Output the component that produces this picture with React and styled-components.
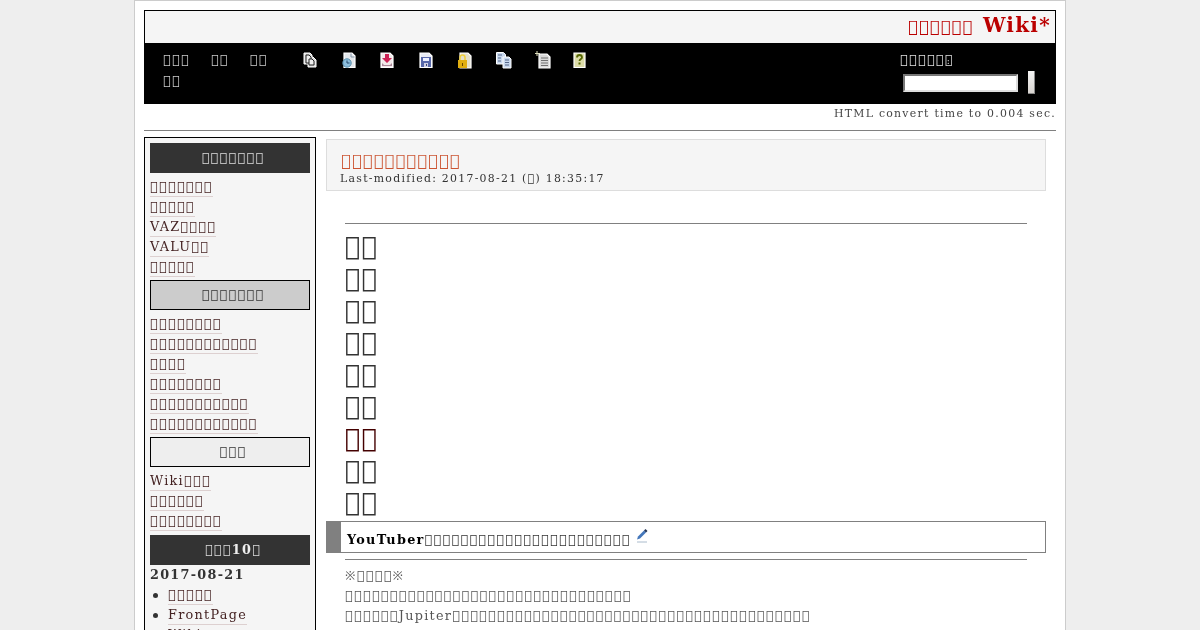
import React from 'react';
import styled, { createGlobalStyle } from 'styled-components';

const T = (n) => '\uE000'.repeat(n);

const GlobalStyle = createGlobalStyle`
  html, body {
    margin: 0;
    height: 630px;
    overflow: hidden;
    background: #eeeeee;
  }
  body {
    font-family: "DejaVu Serif", serif;
    font-size: 12.8px;
    letter-spacing: 1.28px;
    color: #333333;
  }
`;

const Page = styled.div`
  width: 912px;
  margin: 0 auto;
  padding: 9px 9px 0;
  height: 630px;
  background: #ffffff;
  border: 1px solid #cccccc;
  border-bottom: 0;
  overflow: hidden;
  will-change: transform;
`;

const TitleBar = styled.div`
  height: 31px;
  border: 1px solid #000000;
  border-bottom: 0;
  background: #f5f5f5;
  text-align: right;
  padding: 1px 4px 0 0;
  font-size: 20px;
  line-height: 27px;
  color: #bb0000;
`;

const TitleJa = styled.span`
  font-size: 16px;
  margin-right: 2px;
`;

const NavBar = styled.div`
  height: 61px;
  background: #000000;
  display: flex;
  color: #cccccc;
`;

const NavLinks = styled.div`
  width: 140px;
  padding: 7px 0 0 19px;
  line-height: 20.6px;
  display: flex;
  flex-wrap: wrap;
  column-gap: 21px;
  align-content: flex-start;
`;

const IconRow = styled.div`
  display: flex;
  gap: 18.6px;
  padding: 8px 0 0 0;
  align-self: flex-start;
`;

const SearchBox = styled.div`
  margin-left: auto;
  width: 156px;
  padding-top: 7px;
  line-height: 20px;
  color: #e0e0e0;
`;

const Colon = styled.span`
  margin-left: -7px;
  font-size: 9px;
`;

const SearchRow = styled.div`
  display: flex;
  align-items: center;
  padding-left: 3px;
  gap: 10px;
`;

const SearchInput = styled.div`
  width: 115px;
  height: 18px;
  box-sizing: border-box;
  background: #ffffff;
  border: 2px solid;
  border-color: #777777 #dddddd #dddddd #777777;
`;

const SearchButton = styled.div`
  width: 7px;
  height: 23px;
  background: linear-gradient(#f4f4f4, #d8d4d0);
  border-right: 1px solid #888888;
  border-bottom: 1px solid #888888;
  box-sizing: border-box;
`;

const TimeLine = styled.div`
  text-align: right;
  font-size: 10.88px;
  line-height: 18px;
  padding-top: 1px;
  color: #444444;
`;

const Rule = styled.hr`
  border: 0;
  border-top: 1px solid #808080;
  margin: ${({ $m }) => $m || '0'};
`;

const Columns = styled.div`
  display: flex;
  align-items: flex-start;
  margin-top: 6px;
  gap: 10px;
`;

const Side = styled.div`
  width: 160px;
  padding: 5px 5px 40px;
  border: 1px solid #000000;
  background: #f5f5f5;
`;

const SideHead = styled.div`
  height: ${({ $dark }) => ($dark ? '30px' : '28px')};
  line-height: ${({ $dark }) => ($dark ? '30px' : '28px')};
  text-align: center;
  padding-left: 6px;
  background: ${({ $bg }) => $bg};
  color: ${({ $dark }) => ($dark ? '#dddddd' : '#333333')};
  border: ${({ $dark }) => ($dark ? '0' : '1px solid #000000')};
  margin-bottom: 4px;
  strong { color: #eeeeee; }
`;

const SideList = styled.div`
  display: flex;
  flex-direction: column;
  align-items: flex-start;
  margin-bottom: ${({ $gap }) => $gap}px;
`;

const SideLink = styled.a`
  display: inline-block;
  line-height: 20px;
  height: 20px;
  color: #442222;
  box-shadow: inset 0 -1px 0 #ddd0d0;
  white-space: nowrap;
`;

const DateHead = styled.div`
  font-weight: bold;
  line-height: 18px;
  margin-top: -3px;
`;

const Recent = styled.ul`
  margin: 1px 0 0;
  padding: 0 0 0 3px;
  list-style: none;
  line-height: 20px;
`;

const RecentItem = styled.li`
  display: flex;
  align-items: center;
  gap: 10px;
  &::before {
    content: '';
    width: 5px;
    height: 5px;
    border-radius: 50%;
    background: #333333;
  }
`;

const Main = styled.div`
  width: 720px;
  padding-top: 2px;
`;

const TitleBlock = styled.div`
  height: 52px;
  border: 1px solid #dddddd;
  background: #f5f5f5;
  padding-left: 13px;
  box-sizing: border-box;
  h1 {
    margin: 0;
    padding: 10px 0 0 1px;
    font-weight: normal;
    font-size: 16px;
    line-height: 22px;
    color: #cc5533;
  }
`;

const Modified = styled.div`
  font-size: 10.88px;
  line-height: 14px;
`;

const Body = styled.div`
  padding: 0 19px;
`;

const BigLine = styled.div`
  font-size: 25.6px;
  line-height: 32px;
  height: 32px;
  color: ${({ $link }) => ($link ? '#440000' : '#333333')};
`;

const SectionHead = styled.h2`
  margin: 3px 0 0;
  height: 32px;
  box-sizing: border-box;
  border: 1px solid #808080;
  border-left: 15px solid #808080;
  padding: 5px 0 0 6px;
  font-size: 12.8px;
  line-height: 24px;
  color: #000000;
  display: flex;
  align-items: center;
  span { font-weight: normal; color: #333333; }
`;

const EditLink = styled.a`
  display: flex;
  margin: 0 0 9px 6px;
`;

const TextLine = styled.div`
  line-height: 20px;
  color: #555555;
`;

const PageIcon = ({ children }) => (
  <svg width="20" height="18" viewBox="0 0 20 18">{children}</svg>
);

const CopyIcon = () => (
  <PageIcon>
    <path d="M1 2h6l2 2v2h1l3 3v7H5v-3H1z" fill="#d8d8d8" stroke="#ffffff" strokeLinejoin="round" />
    <path d="M3 4h3l2 2v6H3z" fill="#eeeeee" stroke="#222222" />
    <path d="M6 8h3l2 2v4H6z" fill="#eeeeee" stroke="#222222" />
  </PageIcon>
);

const ClockIcon = () => (
  <PageIcon>
    <path d="M2 2h8l3 3v11.5H2z" fill="#e4e8ec" stroke="#ffffff" strokeWidth="1.2" />
    <path d="M9 2.5V6h3.5" fill="none" stroke="#8899aa" />
    <circle cx="5" cy="12" r="4.2" fill="#8cbedd" stroke="#558caa" />
    <path d="M5 9.5V12h2.5" fill="none" stroke="#224466" />
  </PageIcon>
);

const ExportIcon = () => (
  <PageIcon>
    <path d="M1 2h9l3 3v11.5H1z" fill="#f2eaea" stroke="#ffffff" strokeWidth="1.2" />
    <path d="M5 3h4v4h3l-5 5-5-5h3z" fill="#cc2255" />
    <path d="M2 12l2 2h6l2-2v3H2z" fill="#aa8899" />
  </PageIcon>
);

const SaveIcon = () => (
  <PageIcon>
    <path d="M1 2h9l3 3v11.5H1z" fill="#e8eaf4" stroke="#ffffff" strokeWidth="1.2" />
    <path d="M2 6h10v10H2z" fill="#5868aa" />
    <path d="M4 7h6v3H4z" fill="#eef0ff" />
    <path d="M5 12h4v4H5z" fill="#d0d0e4" />
    <path d="M7 13h1v2H7z" fill="#334477" />
  </PageIcon>
);

const LockIcon = () => (
  <PageIcon>
    <path d="M3 2h8l3 3v12H3z" fill="#e4e0cc" stroke="#ffffff" strokeWidth="1.2" />
    <path d="M1 9h9v8H1z" fill="#e0ae10" />
    <path d="M3 9V6.5a2.5 2.5 0 015 0V9" fill="none" stroke="#f0d040" strokeWidth="1.6" />
    <path d="M5 12h1v3H5z" fill="#664400" />
  </PageIcon>
);

const CopyPageIcon = () => (
  <PageIcon>
    <path d="M0.5 1.5h7l2 2V13H0.5z" fill="#c8d8ee" stroke="#ffffff" />
    <path d="M7 6h6l2 2v9H7z" fill="#c8d8ee" stroke="#ffffff" />
    <path d="M2 4h4M2 7h3M2 10h3M9 9h4M9 11.5h4M9 14h4" stroke="#556688" />
  </PageIcon>
);

const NewPageIcon = () => (
  <PageIcon>
    <path d="M4 3h8l3 3v11H4z" fill="#dadada" stroke="#ffffff" strokeWidth="1.2" />
    <path d="M6 7h7M6 9.5h7M6 12h7M6 14.5h7" stroke="#707070" />
    <path d="M2 0v5M0 2.5h5" stroke="#ddddbb" />
  </PageIcon>
);

const HelpIcon = () => (
  <PageIcon>
    <path d="M1 2h11v14.5H1z" fill="#dcdca8" stroke="#ffffff" strokeWidth="1.2" />
    <path d="M4 6.5a2.5 2.5 0 115 0c0 1.5-2.5 1.5-2.5 3.5" fill="none" stroke="#556600" strokeWidth="1.8" />
    <path d="M5.5 11.5h2v2h-2z" fill="#556600" />
  </PageIcon>
);

const EditIcon = () => (
  <svg width="12" height="15" viewBox="0 0 12 15">
    <path d="M1 8.5l6-6 2 2-6 6-3 1z" fill="#4477bb" />
    <path d="M7 2.5l1.5-1.5 2 2L9 4.5z" fill="#223355" />
    <path d="M0 14h10" stroke="#aabbcc" />
  </svg>
);

const NAV_ICONS = [CopyIcon, ClockIcon, ExportIcon, SaveIcon, LockIcon, CopyPageIcon, NewPageIcon, HelpIcon];

const MENU = [
  {
    head: T(7), bg: '#333333', dark: true, gap: 3,
    links: [T(7), T(5), `VAZ${T(4)}`, `VALU${T(2)}`, T(5)],
  },
  {
    head: T(7), bg: '#cccccc', gap: 3,
    links: [T(8), T(12), T(4), T(8), T(11), T(12)],
  },
  {
    head: T(3), bg: '#eeeeee', gap: 4,
    links: [`Wiki${T(3)}`, T(6), T(8)],
  },
];

const BIG_LINES = [0, 0, 0, 0, 0, 0, 1, 0, 0];

export default function App() {
  return (
    <>
      <GlobalStyle />
      <Page>
        <TitleBar><TitleJa>{T(6)}</TitleJa> <strong>Wiki*</strong></TitleBar>
        <NavBar>
          <NavLinks>
            <span>{T(3)}</span>
            <span>{T(2)}</span>
            <span>{T(2)}</span>
            <span>{T(2)}</span>
          </NavLinks>
          <IconRow>
            {NAV_ICONS.map((Icon, i) => <Icon key={i} />)}
          </IconRow>
          <SearchBox>
            {T(6)}<Colon>:</Colon>
            <SearchRow>
              <SearchInput />
              <SearchButton />
            </SearchRow>
          </SearchBox>
        </NavBar>
        <TimeLine>HTML convert time to 0.004 sec.</TimeLine>
        <Rule $m="7px 0 0" />
        <Columns>
          <Side>
            {MENU.map((section, i) => (
              <div key={i}>
                <SideHead $dark={section.dark} $bg={section.bg}>{section.head}</SideHead>
                <SideList $gap={section.gap}>
                  {section.links.map((l, j) => <SideLink key={j}>{l}</SideLink>)}
                </SideList>
              </div>
            ))}
            <SideHead $dark $bg="#333333">{T(3)}<strong>10</strong>{T(1)}</SideHead>
            <DateHead>2017-08-21</DateHead>
            <Recent>
              <RecentItem><SideLink>{T(5)}</SideLink></RecentItem>
              <RecentItem><SideLink>FrontPage</SideLink></RecentItem>
              <RecentItem><SideLink>Wiki</SideLink></RecentItem>
            </Recent>
          </Side>
          <Main>
            <TitleBlock>
              <h1>{T(11)}</h1>
              <Modified>Last-modified: 2017-08-21 ({T(1)}) 18:35:17</Modified>
            </TitleBlock>
            <Body>
              <Rule $m="32px 0 6px" />
              {BIG_LINES.map((link, i) => <BigLine key={i} $link={link}>{T(2)}</BigLine>)}
            </Body>
            <SectionHead>YouTuber<span>{T(23)}</span><EditLink><EditIcon /></EditLink></SectionHead>
            <Body>
              <Rule $m="6px 0 6px" />
              <TextLine>※{T(4)}※</TextLine>
              <TextLine>{T(32)}</TextLine>
              <TextLine>{T(6)}Jupiter{T(40)}</TextLine>
            </Body>
          </Main>
        </Columns>
      </Page>
    </>
  );
}
